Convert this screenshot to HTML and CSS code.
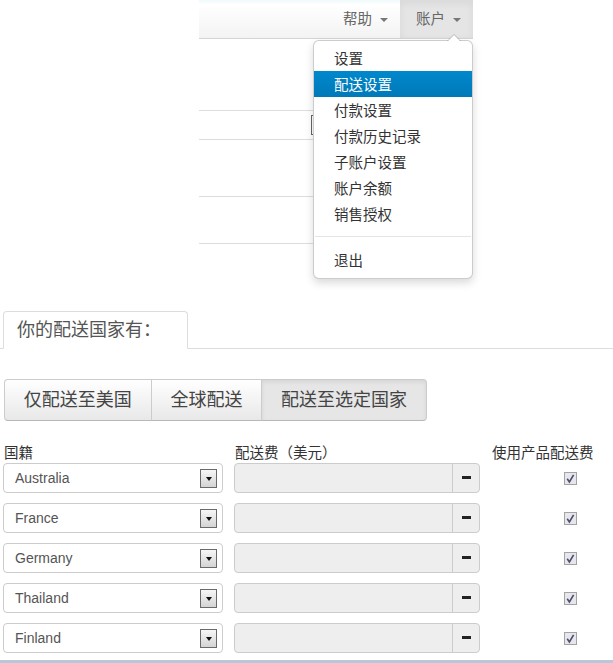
FILE: index.html
```html
<!DOCTYPE html>
<html lang="zh-CN">
<head>
<meta charset="UTF-8" />
<title>配送设置</title>
<link rel="stylesheet" href="styles.css">
</head>
<body>

<div class="navbar">
  <div class="nav-item">帮助<span class="caret"></span></div>
  <div class="nav-item open">账户<span class="caret"></span>
    <ul class="dropdown">
      <li>设置</li>
      <li class="active">配送设置</li>
      <li>付款设置</li>
      <li>付款历史记录</li>
      <li>子账户设置</li>
      <li>账户余额</li>
      <li>销售授权</li>
      <li class="divider"></li>
      <li>退出</li>
    </ul>
  </div>
</div>

<!-- contenu derrière le menu -->
<div class="ghost">
  <div class="ghost-row r1"><span class="ghost-box"></span></div>
  <div class="ghost-row r2"></div>
  <div class="ghost-row r3"></div>
  <div class="ghost-row r4"></div>
</div>

<div class="tabs">
  <div class="tab">你的配送国家有：</div>
</div>

<div class="btn-group">
  <div class="btn">仅配送至美国</div>
  <div class="btn">全球配送</div>
  <div class="btn active">配送至选定国家</div>
</div>

<div class="grid heads">
  <div class="head">国籍</div>
  <div class="head">配送费（美元）</div>
  <div class="head">使用产品配送费</div>
</div>

<div class="grid rows">
  <div class="select">Australia<span class="arrow"></span></div>
  <div class="input-group"><div class="input"></div><div class="addon"><span class="dash"></span></div></div>
  <div class="check-cell"><svg width="13" height="13" viewBox="0 0 13 13"><rect x="0.5" y="0.5" width="12" height="12" fill="#e6e6ec" stroke="#a3a3a3"/><path d="M3.2 6.8 L5.4 10 L9.6 2.8" fill="none" stroke="#4a4e6c" stroke-width="1.6"/></svg></div>

  <div class="select">France<span class="arrow"></span></div>
  <div class="input-group"><div class="input"></div><div class="addon"><span class="dash"></span></div></div>
  <div class="check-cell"><svg width="13" height="13" viewBox="0 0 13 13"><rect x="0.5" y="0.5" width="12" height="12" fill="#e6e6ec" stroke="#a3a3a3"/><path d="M3.2 6.8 L5.4 10 L9.6 2.8" fill="none" stroke="#4a4e6c" stroke-width="1.6"/></svg></div>

  <div class="select">Germany<span class="arrow"></span></div>
  <div class="input-group"><div class="input"></div><div class="addon"><span class="dash"></span></div></div>
  <div class="check-cell"><svg width="13" height="13" viewBox="0 0 13 13"><rect x="0.5" y="0.5" width="12" height="12" fill="#e6e6ec" stroke="#a3a3a3"/><path d="M3.2 6.8 L5.4 10 L9.6 2.8" fill="none" stroke="#4a4e6c" stroke-width="1.6"/></svg></div>

  <div class="select">Thailand<span class="arrow"></span></div>
  <div class="input-group"><div class="input"></div><div class="addon"><span class="dash"></span></div></div>
  <div class="check-cell"><svg width="13" height="13" viewBox="0 0 13 13"><rect x="0.5" y="0.5" width="12" height="12" fill="#e6e6ec" stroke="#a3a3a3"/><path d="M3.2 6.8 L5.4 10 L9.6 2.8" fill="none" stroke="#4a4e6c" stroke-width="1.6"/></svg></div>

  <div class="select">Finland<span class="arrow"></span></div>
  <div class="input-group"><div class="input"></div><div class="addon"><span class="dash"></span></div></div>
  <div class="check-cell"><svg width="13" height="13" viewBox="0 0 13 13"><rect x="0.5" y="0.5" width="12" height="12" fill="#e6e6ec" stroke="#a3a3a3"/><path d="M3.2 6.8 L5.4 10 L9.6 2.8" fill="none" stroke="#4a4e6c" stroke-width="1.6"/></svg></div>
</div>

<div class="footer-line"></div>

</body>
</html>
```

FILE: styles.css
```css
body {
  margin: 0;
  padding: 0 0 0 3px;
  font-family: "Liberation Sans", "Noto Sans CJK SC", sans-serif;
  font-size: 14px;
  color: #333;
  background: #fff;
  height: 663px;
  overflow: hidden;
}
/* barre du haut */
.navbar {
  margin-left: 196px;
  width: 274px;
  height: 38px;
  border-bottom: 1px solid #d4d4d4;
  background: linear-gradient(#effafa, #fff 12%, #f3f3f3);
  display: flex;
  justify-content: flex-end;
}
.nav-item {
  position: relative;
  padding: 0 12px 0 16px;
  line-height: 36px;
  font-size: 14.5px;
  color: #666;
  font-family: "Noto Sans CJK SC", sans-serif;
}
.nav-item.open {
  background: #e5e5e5;
  box-shadow: inset 0 3px 8px rgba(0,0,0,0.06);
}
.caret {
  display: inline-block;
  width: 0;
  height: 0;
  margin-left: 8px;
  vertical-align: middle;
  border-top: 4px solid #777;
  border-left: 4px solid transparent;
  border-right: 4px solid transparent;
}
.dropdown {
  position: absolute;
  top: 40px;
  right: 0;
  width: 158px;
  margin: 0;
  padding: 4px 0 5px;
  list-style: none;
  background: #fff;
  border: 1px solid rgba(0,0,0,0.2);
  border-radius: 6px;
  box-shadow: 0 4px 8px rgba(0,0,0,0.15);
  z-index: 10;
}
.dropdown:before {
  content: "";
  position: absolute;
  top: -7px;
  right: 11px;
  border-left: 7px solid transparent;
  border-right: 7px solid transparent;
  border-bottom: 7px solid rgba(0,0,0,0.2);
}
.dropdown:after {
  content: "";
  position: absolute;
  top: -6px;
  right: 12px;
  border-left: 6px solid transparent;
  border-right: 6px solid transparent;
  border-bottom: 6px solid #fff;
}
.dropdown li {
  padding: 3px 20px;
  line-height: 20px;
  font-size: 14.5px;
  color: #333;
}
.dropdown li.active {
  color: #fff;
  background: linear-gradient(#0088cc, #0079b8);
}
.dropdown li.divider {
  height: 1px;
  padding: 0;
  margin: 9px 1px 10px;
  background: #e5e5e5;
}
/* lignes derrière le menu */
.ghost {
  margin-left: 196px;
  width: 274px;
  padding-top: 71px;
}
.ghost-row {
  border-top: 1px solid #ddd;
  box-sizing: border-box;
}
.r1 { height: 29px; padding: 4px 0 0 112px; }
.r2 { height: 57px; }
.r3 { height: 47px; }
.r4 { height: 68px; }
.ghost-box {
  display: block;
  width: 10px;
  height: 18px;
  border: 1px solid #666;
}
/* onglet */
.tabs {
  display: flex;
  border-bottom: 1px solid #ddd;
  margin-left: -3px;
  padding-left: 3px;
}
.tab {
  margin-bottom: -1px;
  padding: 8px 26px 8px 13px;
  line-height: 20px;
  font-size: 18px;
  color: #555;
  background: #fff;
  border: 1px solid #ddd;
  border-bottom-color: transparent;
  border-radius: 4px 4px 0 0;
}
/* boutons */
.btn-group {
  display: inline-flex;
  margin: 30px 0 0 1px;
}
.btn {
  padding: 0 18.8px;
  line-height: 40px;
  font-size: 18px;
  color: #444;
  background: linear-gradient(#fff, #e8e8e8);
  border: 1px solid #ccc;
  border-bottom-color: #b8b8b8;
  margin-left: -1px;
}
.btn:first-child {
  margin-left: 0;
  border-radius: 4px 0 0 4px;
}
.btn:last-child {
  border-radius: 0 4px 4px 0;
}
.btn.active {
  background: #e6e6e6;
  box-shadow: inset 0 2px 4px rgba(0,0,0,0.08);
}
/* tableau */
.grid {
  display: grid;
  grid-template-columns: 220px 246px 1fr;
  column-gap: 11px;
}
.heads {
  margin-top: 22px;
}
.head {
  line-height: 20px;
  font-size: 14.5px;
  color: #333;
  margin-left: 1px;
}
.rows {
  grid-auto-rows: 30px;
  row-gap: 10px;
}
.select {
  display: flex;
  align-items: center;
  justify-content: space-between;
  box-sizing: border-box;
  padding: 0 5px 0 11px;
  font-size: 14px;
  color: #555;
  border: 1px solid #ccc;
  border-radius: 4px;
  background: #fff;
}
.arrow {
  width: 17px;
  height: 19px;
  box-sizing: border-box;
  border: 1px solid #6a6a6a;
  background: linear-gradient(#f7f7f7, #d4d4d4);
  display: flex;
  justify-content: center;
  padding-top: 7px;
}
.arrow:after {
  content: "";
  width: 0;
  height: 0;
  border-top: 4px solid #111;
  border-left: 3px solid transparent;
  border-right: 3px solid transparent;
}
.input-group {
  display: flex;
  box-sizing: border-box;
  border: 1px solid #ccc;
  border-radius: 4px;
  background: #eeeeef;
  overflow: hidden;
}
.input {
  flex: 1;
}
.addon {
  width: 26px;
  border-left: 1px solid #ccc;
  display: flex;
  align-items: center;
  justify-content: center;
  padding-bottom: 2px;
}
.dash {
  width: 9px;
  height: 3px;
  background: #222;
}
.check-cell {
  display: flex;
  align-items: center;
  padding-left: 73px;
}
.footer-line {
  margin: 7px 0 0 -3px;
  height: 3px;
  background: #b7c8d8;
}
```
